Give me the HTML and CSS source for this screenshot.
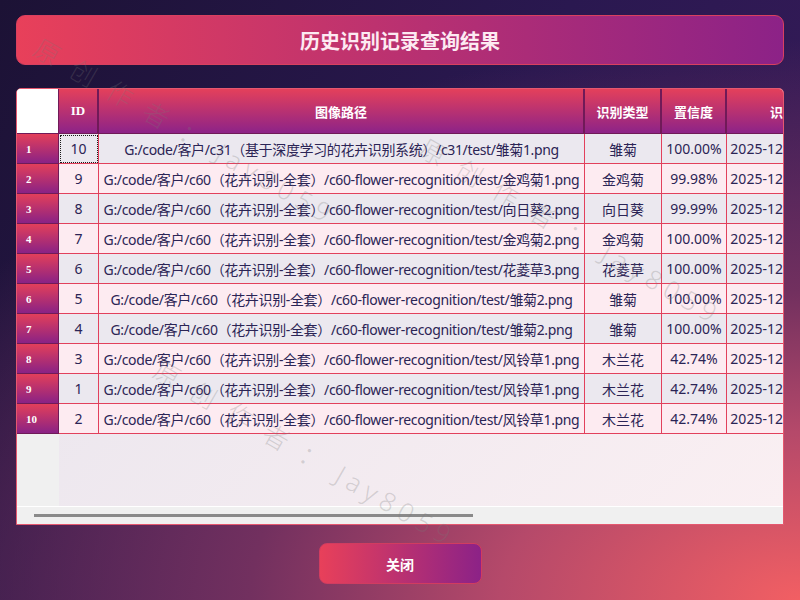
FILE: index.html
```html
<!DOCTYPE html>
<html lang="zh-CN">
  <head>
    <meta charset="UTF-8" />
    <meta name="viewport" content="width=device-width, initial-scale=1.0" />
    <title>历史识别记录查询结果</title>
    <link rel="stylesheet" href="styles.css">
  </head>
  <body>
    <div class="dialog">
      <div class="title-bar">历史识别记录查询结果</div>

      <!-- 记录表格 -->
      <div class="table-frame">
        <div class="table-view">
          <table class="records">
            <thead>
              <tr>
                <th class="corner"></th>
                <th class="col-id">ID</th>
                <th class="col-path">图像路径</th>
                <th class="col-type">识别类型</th>
                <th class="col-conf">置信度</th>
                <th class="col-time">识别时间</th>
              </tr>
            </thead>
            <tbody>
              <tr>
                <th>1</th>
                <td class="current">10</td>
                <td class="path">G:/code/客户/c31（基于深度学习的花卉识别系统）/c31/test/雏菊1.png</td>
                <td>雏菊</td>
                <td>100.00%</td>
                <td>2025-12-16 21:08:42</td>
              </tr>
              <tr>
                <th>2</th>
                <td>9</td>
                <td class="path">G:/code/客户/c60（花卉识别-全套）/c60-flower-recognition/test/金鸡菊1.png</td>
                <td>金鸡菊</td>
                <td>99.98%</td>
                <td>2025-12-16 20:55:13</td>
              </tr>
              <tr>
                <th>3</th>
                <td>8</td>
                <td class="path">G:/code/客户/c60（花卉识别-全套）/c60-flower-recognition/test/向日葵2.png</td>
                <td>向日葵</td>
                <td>99.99%</td>
                <td>2025-12-16 20:54:37</td>
              </tr>
              <tr>
                <th>4</th>
                <td>7</td>
                <td class="path">G:/code/客户/c60（花卉识别-全套）/c60-flower-recognition/test/金鸡菊2.png</td>
                <td>金鸡菊</td>
                <td>100.00%</td>
                <td>2025-12-16 20:53:58</td>
              </tr>
              <tr>
                <th>5</th>
                <td>6</td>
                <td class="path">G:/code/客户/c60（花卉识别-全套）/c60-flower-recognition/test/花菱草3.png</td>
                <td>花菱草</td>
                <td>100.00%</td>
                <td>2025-12-16 20:52:21</td>
              </tr>
              <tr>
                <th>6</th>
                <td>5</td>
                <td class="path">G:/code/客户/c60（花卉识别-全套）/c60-flower-recognition/test/雏菊2.png</td>
                <td>雏菊</td>
                <td>100.00%</td>
                <td>2025-12-16 20:51:09</td>
              </tr>
              <tr>
                <th>7</th>
                <td>4</td>
                <td class="path">G:/code/客户/c60（花卉识别-全套）/c60-flower-recognition/test/雏菊2.png</td>
                <td>雏菊</td>
                <td>100.00%</td>
                <td>2025-12-16 20:50:46</td>
              </tr>
              <tr>
                <th>8</th>
                <td>3</td>
                <td class="path">G:/code/客户/c60（花卉识别-全套）/c60-flower-recognition/test/风铃草1.png</td>
                <td>木兰花</td>
                <td>42.74%</td>
                <td>2025-12-16 20:49:30</td>
              </tr>
              <tr>
                <th>9</th>
                <td>1</td>
                <td class="path">G:/code/客户/c60（花卉识别-全套）/c60-flower-recognition/test/风铃草1.png</td>
                <td>木兰花</td>
                <td>42.74%</td>
                <td>2025-12-16 20:47:02</td>
              </tr>
              <tr>
                <th>10</th>
                <td>2</td>
                <td class="path">G:/code/客户/c60（花卉识别-全套）/c60-flower-recognition/test/风铃草1.png</td>
                <td>木兰花</td>
                <td>42.74%</td>
                <td>2025-12-16 20:48:15</td>
              </tr>
            </tbody>
          </table>
        </div>
        <div class="hscroll"><div class="hscroll-handle"></div></div>
      </div>

      <div class="actions">
        <button class="close-btn">关闭</button>
      </div>

      <!-- 水印 -->
      <div class="watermark wm-1"><span class="wm-cn">原创作者：</span>Jay8059</div>
      <div class="watermark wm-2"><span class="wm-cn">原创作者：</span>Jay8059</div>
      <div class="watermark wm-3"><span class="wm-cn">原创作者：</span>Jay8059</div>
    </div>
  </body>
</html>
```

FILE: styles.css
```css
* {
  box-sizing: border-box;
}

html,
body {
  margin: 0;
  height: 100%;
}

body {
  width: 800px;
  height: 600px;
  overflow: hidden;
  font-family: "Noto Sans", "Noto Sans CJK SC", sans-serif;
  background:
    radial-gradient(ellipse 1000px 560px at 100% 100%, #f25f63 0%, #b5496a 30%, #72305f 55%, rgba(46, 26, 85, 0) 100%),
    linear-gradient(120deg, #1c1235 0%, #2a1850 50%, #3a1c5c 100%);
}

.dialog {
  position: relative;
  height: 600px;
  padding: 15px 16px 0;
  display: flex;
  flex-direction: column;
}

.title-bar {
  height: 50px;
  border: 1px solid #d9405f;
  border-radius: 9px;
  background: linear-gradient(to right, #e8405a, #8c2287);
  color: #fdeaf2;
  font: bold 20px "Noto Sans CJK SC", sans-serif;
  display: flex;
  align-items: center;
  justify-content: center;
}

.table-frame {
  margin-top: 23px;
  height: 437px;
  border: 1px solid #e5586f;
  border-radius: 5px 5px 0 0;
  overflow: hidden;
  display: flex;
  flex-direction: column;
  background: #f0f0f0;
}

.table-view {
  flex: 1;
  overflow: hidden;
  background:
    linear-gradient(#f0f0f0, #f0f0f0) 0 0 / 42px 100% no-repeat,
    linear-gradient(135deg, #e7e4ed, #faeff2);
}

.records {
  table-layout: fixed;
  width: 850px;
  border-collapse: separate;
  border-spacing: 0;
}

.records th,
.records td {
  padding: 0;
  white-space: nowrap;
  overflow: hidden;
}

.records thead th {
  height: 45px;
  border-right: 2px solid #701a58;
  border-bottom: 1px solid #701a58;
  background: linear-gradient(#e4405b, #8d2388);
  color: #fff;
  font: bold 13px "Noto Sans CJK SC", sans-serif;
}

.records thead .corner {
  width: 42px;
  background: #fff;
  border-right-width: 1px;
}

.col-id { width: 40px; }
.col-path { width: 486px; }
.col-type { width: 77px; }
.col-conf { width: 65px; }
.col-time { width: 140px; }

.records thead .col-id {
  font-family: "Liberation Serif", serif;
}

.records tbody th {
  height: 30px;
  padding-left: 9px;
  text-align: left;
  border-right: 1px solid #701a58;
  border-bottom: 1px solid #701a58;
  background: linear-gradient(#e33f5a, #8a2285);
  color: #fff;
  font: bold 11px "Liberation Serif", serif;
}

.records td {
  height: 30px;
  padding: 0 1px;
  text-align: center;
  border-right: 1px solid #e2405c;
  border-bottom: 1px solid #e2405c;
  color: #2b2455;
  font-size: 14px;
}

.records td.path {
  letter-spacing: -0.35px;
}

.records tbody tr:nth-child(odd) td {
  background: #ebe8ef;
}

.records tbody tr:nth-child(even) td {
  background: #fdebf1;
}

.records td.current {
  outline: 1px dotted #1a1a1a;
  outline-offset: -2px;
}

.hscroll {
  height: 18px;
  border-top: 1px solid #fff;
  background: #f0f0f0;
  padding: 7px 0 0 17px;
}

.hscroll-handle {
  width: 439px;
  height: 3px;
  background: #8a8a8a;
}

.actions {
  display: flex;
  justify-content: center;
  margin-top: 18px;
}

.close-btn {
  width: 163px;
  height: 41px;
  border: 1px solid #d13c60;
  border-radius: 8px;
  background: linear-gradient(to right, #e8405a, #8c2287);
  color: #fff;
  font: bold 14px "Noto Sans CJK SC", sans-serif;
  cursor: pointer;
}

/* 水印：斜向铺在整个窗口之上 */
.watermark {
  position: absolute;
  transform-origin: 0 0;
  transform: rotate(30deg);
  font: 300 26px "Noto Sans", "Noto Sans CJK SC", sans-serif;
  letter-spacing: 6px;
  color: rgba(120, 120, 120, 0.26);
  white-space: nowrap;
  pointer-events: none;
}

.wm-cn {
  letter-spacing: 16px;
}

.wm-1 { left: 46px; top: 28px; }
.wm-2 { left: 432px; top: 128px; }
.wm-3 { left: 166px; top: 350px; }
```
